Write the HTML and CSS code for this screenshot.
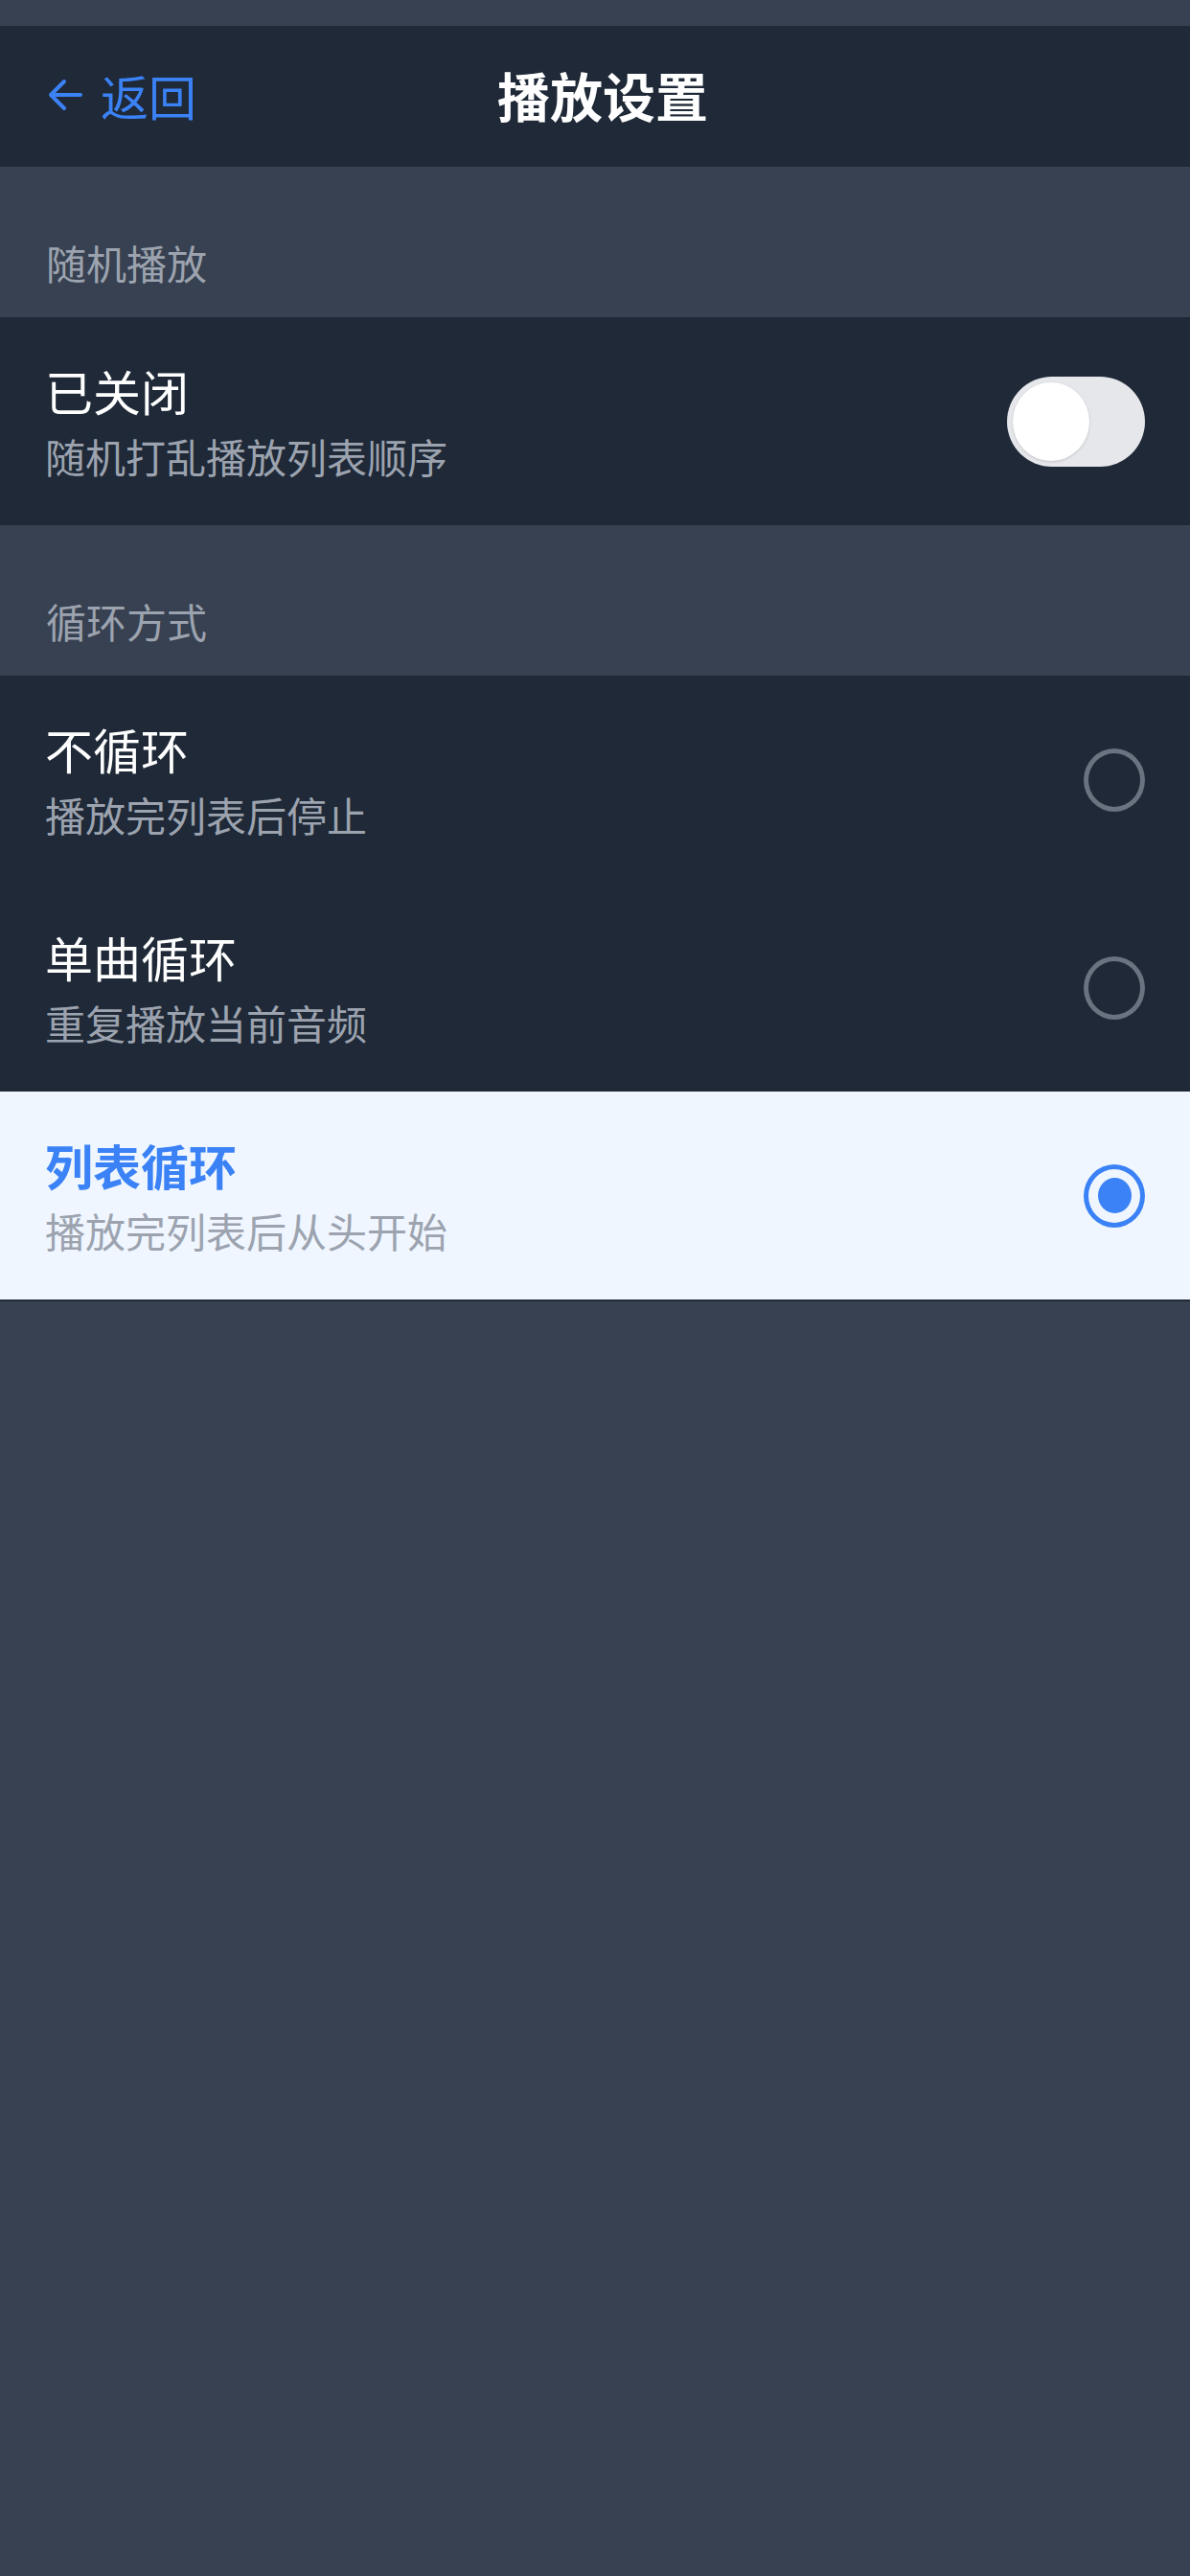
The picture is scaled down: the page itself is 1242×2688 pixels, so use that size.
FILE: index.html
```html
<!DOCTYPE html>
<html lang="zh-CN">

<head>
    <meta charset="UTF-8">
    <meta name="viewport" content="width=device-width, initial-scale=1.0">
    <link rel="stylesheet" href="styles.css">
    <title>播放设置</title>
</head>

<body>
    <div class="container">
        <div class="status"></div>

        <header class="topbar">
            <a class="back" href="#">
                <svg width="40" height="40" viewBox="0 0 40 40" fill="none" stroke="#3b82f6" stroke-width="4"
                    stroke-linecap="round" stroke-linejoin="round">
                    <path d="M36 20 H5 M19 6 L5 20 L19 34" />
                </svg>
                <span>返回</span>
            </a>
            <h1>播放设置</h1>
            <div></div>
        </header>

        <div class="section-label">随机播放</div>
        <div class="list">
            <div class="row">
                <div class="text">
                    <div class="title">已关闭</div>
                    <div class="sub">随机打乱播放列表顺序</div>
                </div>
                <div class="toggle">
                    <div class="knob"></div>
                </div>
            </div>
        </div>

        <div class="section-label">循环方式</div>
        <div class="list">
            <div class="row">
                <div class="text">
                    <div class="title">不循环</div>
                    <div class="sub">播放完列表后停止</div>
                </div>
                <div class="radio"></div>
            </div>
            <div class="row">
                <div class="text">
                    <div class="title">单曲循环</div>
                    <div class="sub">重复播放当前音频</div>
                </div>
                <div class="radio"></div>
            </div>
            <div class="row active">
                <div class="text">
                    <div class="title">列表循环</div>
                    <div class="sub">播放完列表后从头开始</div>
                </div>
                <div class="radio checked"></div>
            </div>
        </div>
    </div>
</body>

</html>
```

FILE: styles.css
```css
* {
    margin: 0;
    padding: 0;
    box-sizing: border-box;
    font-family: "Noto Sans CJK SC", "Noto Sans", sans-serif;
}

body {
    background-color: #374151;
    min-height: 100vh;
}

.status {
    height: 27px;
}

.topbar {
    background-color: #1f2937;
    height: 147px;
    display: grid;
    grid-template-columns: 1fr auto 1fr;
    align-items: center;
    padding: 0 48px 4px;
}

.back {
    display: flex;
    align-items: center;
    gap: 17px;
    color: #3b82f6;
    text-decoration: none;
    font-size: 50px;
    line-height: 1;
}

.back svg {
    display: block;
}

.topbar h1 {
    color: #fff;
    font-size: 55px;
    font-weight: 700;
    line-height: 1;
    padding-left: 16px;
}

.section-label {
    color: #9ca3af;
    font-size: 42px;
    line-height: 56px;
    padding: 72px 48px 29px;
}

.list {
    background-color: #1f2937;
}

.row {
    height: 217px;
    display: flex;
    align-items: center;
    justify-content: space-between;
    padding: 0 47px 0 48px;
}

.title {
    color: #fff;
    font-size: 50px;
    line-height: 80px;
}

.sub {
    color: #9ca3af;
    font-size: 42px;
    line-height: 58px;
}

.text {
    padding-bottom: 8px;
    margin-left: -1px;
}

.toggle {
    width: 144px;
    height: 94px;
    border-radius: 47px;
    background-color: #e5e7eb;
    padding: 6px;
}

.knob {
    width: 80px;
    height: 82px;
    border-radius: 50%;
    background-color: #fff;
    box-shadow: 0 1px 3px rgba(0, 0, 0, 0.15);
}

.radio {
    width: 64px;
    height: 66px;
    border-radius: 50%;
    border: 5px solid #6b7280;
    display: flex;
    align-items: center;
    justify-content: center;
}

.radio.checked {
    border-color: #3b82f6;
}

.radio.checked::after {
    content: "";
    width: 35px;
    height: 37px;
    border-radius: 50%;
    background-color: #3b82f6;
}

.row.active {
    background-color: #eff6ff;
    border-bottom: 2px solid #1f2937;
    height: 219px;
}

.row.active .title {
    color: #3b82f6;
    font-weight: 700;
}
```
